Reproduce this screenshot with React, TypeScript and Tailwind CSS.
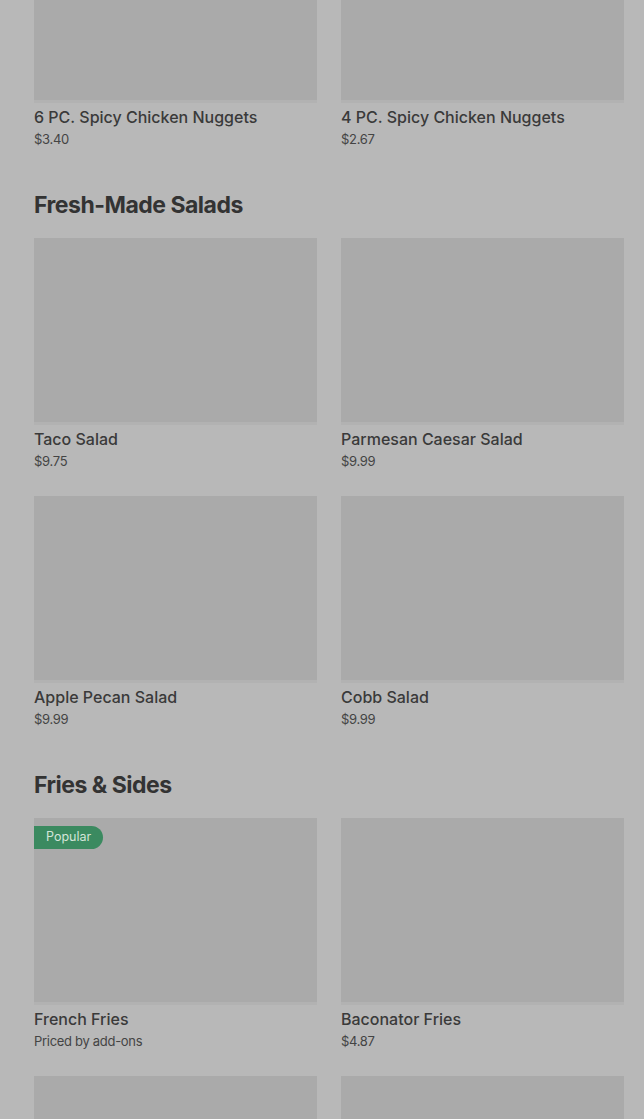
import React from 'react';

type Item = { name?: string; price?: string; badge?: string };

const SECTIONS: { title?: string; items: Item[] }[] = [
  {
    items: [
      { name: '6 PC. Spicy Chicken Nuggets', price: '$3.40' },
      { name: '4 PC. Spicy Chicken Nuggets', price: '$2.67' },
    ],
  },
  {
    title: 'Fresh-Made Salads',
    items: [
      { name: 'Taco Salad', price: '$9.75' },
      { name: 'Parmesan Caesar Salad', price: '$9.99' },
      { name: 'Apple Pecan Salad', price: '$9.99' },
      { name: 'Cobb Salad', price: '$9.99' },
    ],
  },
  {
    title: 'Fries & Sides',
    items: [
      { name: 'French Fries', price: 'Priced by add-ons', badge: 'Popular' },
      { name: 'Baconator Fries', price: '$4.87' },
      // next row scrolls out of view, only the images show
      {},
      {},
    ],
  },
];

function ItemCard({ item }: { item: Item }) {
  return (
    <div className="flex flex-col">
      {/* Image placeholder */}
      <div className="relative h-[187px] bg-[#aaaaaa] border-b-[3px] border-[#b2b2b2]">
        {item.badge && (
          <span className="absolute left-0 top-[8px] h-[23px] pl-[12px] pr-[12px] flex items-center rounded-r-full bg-[#3b8a60] text-[12.5px] text-[#d3e5d9]">
            {item.badge}
          </span>
        )}
      </div>
      {item.name && (
        <>
          <div className="mt-[3px] text-[16px] leading-[22px] font-medium text-[#3a3a3a]">{item.name}</div>
          <div className="text-[13px] leading-[22px] text-[#444444] tracking-[-0.3px]">{item.price}</div>
        </>
      )}
    </div>
  );
}

export default function App() {
  return (
    <div
      className="bg-[#b8b8b8] overflow-hidden h-[1119px]"
      style={{ fontFamily: 'Inter, "Noto Sans", sans-serif' }}
    >
      <main className="pl-[34px] pr-[20px] mt-[-84px]">
        {SECTIONS.map((section, i) => (
          <section key={i} className={i > 0 ? 'mt-[39px]' : ''}>
            {section.title && (
              <h2 className="text-[23px] leading-[32px] font-bold tracking-[-0.5px] text-[#333333] mb-[17px]">
                {section.title}
              </h2>
            )}
            <div className="grid grid-cols-2 gap-x-[24px] gap-y-[24px]">
              {section.items.map((item, j) => (
                <ItemCard key={j} item={item} />
              ))}
            </div>
          </section>
        ))}
      </main>
    </div>
  );
}
